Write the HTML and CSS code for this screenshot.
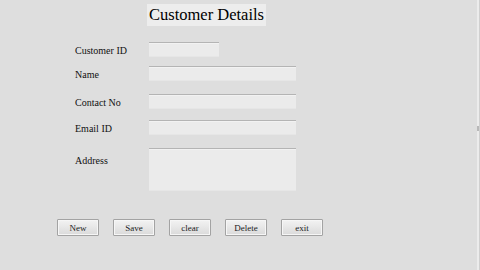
FILE: index.html
```html
<!DOCTYPE html>
<html>
<head>
<meta charset="utf-8">
<link rel="stylesheet" href="styles.css">
</head>
<body>
<div class="frame">
  <div class="title-row"><h1 class="title">Customer Details</h1></div>
  <form class="form">
    <label class="label">Customer ID</label>
    <div class="field short"></div>
    <label class="label">Name</label>
    <div class="field"></div>
    <label class="label">Contact No</label>
    <div class="field"></div>
    <label class="label">Email ID</label>
    <div class="field"></div>
    <label class="label label-top">Address</label>
    <div class="field area"></div>
  </form>
  <div class="buttons">
    <button class="btn" type="button">New</button>
    <button class="btn" type="button">Save</button>
    <button class="btn" type="button">clear</button>
    <button class="btn" type="button">Delete</button>
    <button class="btn" type="button">exit</button>
  </div>
  <div class="edge"><span class="edge-mark"></span></div>
</div>
</body>
</html>
```
FILE: styles.css
```css
html, body {
  margin: 0;
  padding: 0;
}
body {
  width: 480px;
  height: 270px;
  overflow: hidden;
  background: #dedede;
  font-family: "Liberation Serif", "DejaVu Serif", serif;
  color: #1a1a1a;
}
.frame {
  position: relative;
  width: 480px;
  height: 270px;
}
.title-row {
  padding: 4px 0 0 147px;
  height: 22px;
}
.title {
  display: inline-block;
  margin: 0;
  padding: 0 2px;
  background: #ededed;
  font-family: "Liberation Serif", serif;
  font-size: 16.5px;
  font-weight: normal;
  line-height: 22px;
  color: #000;
}
.form {
  display: grid;
  grid-template-columns: 74px 147px;
  grid-template-rows: 24px 28px 26px 28px 42px;
  margin: 16px 0 0 75px;
}
.label {
  font-family: "Liberation Serif", serif;
  font-size: 10px;
  line-height: 14px;
  padding-top: 2px;
  color: #111;
}
.label-top {
  padding-top: 6px;
}
.field {
  height: 13px;
  background: #ebebeb;
  border-top: 1px solid #b4b4b4;
  box-shadow: inset 0 1px 0 #f2f2f2, 0 1px 0 #e6e6e6;
}
.field.short {
  width: 70px;
}
.field.area {
  height: 41px;
}
.buttons {
  display: flex;
  gap: 14px;
  margin: 29px 0 0 57px;
}
.btn {
  width: 42px;
  height: 17px;
  padding: 0;
  border: 1px solid #a3a3a3;
  border-radius: 1px;
  background: linear-gradient(#f3f3f3, #dadada);
  box-shadow: inset 0 0 0 1px #f6f6f6;
  font-family: "Liberation Serif", serif;
  font-size: 9px;
  color: #222;
}
.edge {
  position: absolute;
  top: 0;
  right: 0;
  width: 3px;
  height: 270px;
  background: #ececec;
  border-right: 1px solid #d0d0d0;
  box-sizing: border-box;
}
.edge-mark {
  position: absolute;
  top: 126px;
  right: 0;
  width: 2px;
  height: 5px;
  background: #b8b8b8;
}
```
